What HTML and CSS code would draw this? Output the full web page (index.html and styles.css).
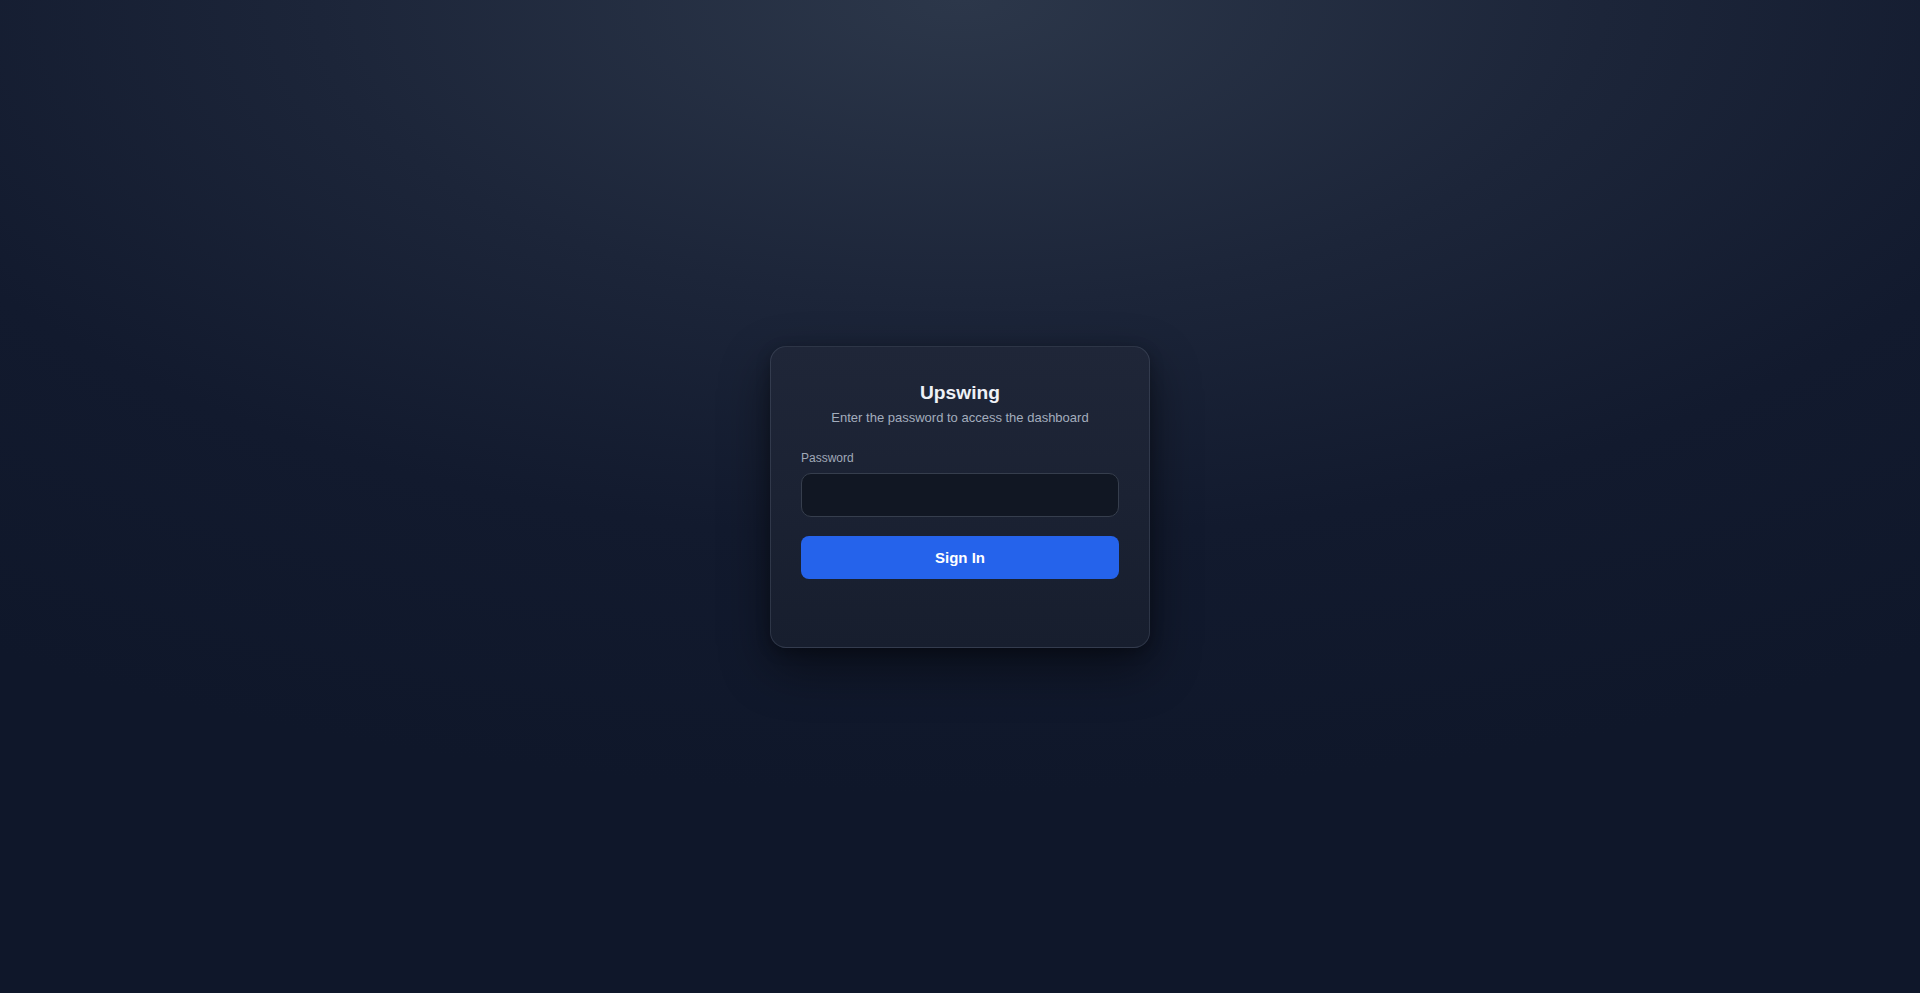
FILE: index.html
```html
<!DOCTYPE html>
<html lang="en">
<head>
<meta charset="utf-8">
<title>Upswing</title>
<link rel="stylesheet" href="styles.css">
</head>
<body>
<main class="page">
  <form class="card" onsubmit="return false">
    <h1 class="title">Upswing</h1>
    <p class="subtitle">Enter the password to access the dashboard</p>
    <label class="label" for="password">Password</label>
    <input class="input" id="password" type="password">
    <button class="button" type="submit">Sign In</button>
  </form>
</main>
</body>
</html>
```

FILE: styles.css
```css
* { box-sizing: border-box; }
html, body { margin: 0; height: 100%; }
body {
  font-family: "Liberation Sans", Arial, sans-serif;
  background-color: #0f172a;
  background-image: radial-gradient(ellipse 88% 80% at 50% 0%, #2c374a 0%, #1c2539 38%, #121a2e 68%, #0f172a 100%);
  color: #e5e7eb;
}
.page {
  min-height: 100vh;
  display: flex;
  align-items: center;
  justify-content: center;
}
.card {
  width: 380px;
  display: flex;
  flex-direction: column;
  padding: 35px 30px 68px;
  border: 1px solid rgba(148, 163, 184, 0.18);
  border-radius: 16px;
  background: linear-gradient(180deg, #1f2638 0%, #171e2e 100%);
  box-shadow: 0 20px 50px rgba(0, 0, 0, 0.45), 0 4px 14px rgba(0, 0, 0, 0.25);
}
.title {
  margin: 0 0 6px;
  font-size: 19.2px;
  line-height: 22px;
  font-weight: 700;
  text-align: center;
  color: #eef1f6;
}
.subtitle {
  margin: 0 0 26px;
  font-size: 13px;
  line-height: 15px;
  text-align: center;
  color: #a3adbd;
}
.label {
  margin-bottom: 8px;
  font-size: 12px;
  line-height: 14px;
  color: #a0a9b8;
}
.input {
  height: 44px;
  width: 100%;
  padding: 0 12px;
  border: 1px solid #363e4d;
  border-radius: 10px;
  background: #111723;
  color: #e5e7eb;
  font: inherit;
  outline: none;
}
.button {
  margin-top: 19px;
  height: 43px;
  width: 100%;
  border: 0;
  border-radius: 8px;
  background: #2563eb;
  color: #ffffff;
  font-family: inherit;
  font-size: 15px;
  font-weight: 700;
  cursor: pointer;
}
```
